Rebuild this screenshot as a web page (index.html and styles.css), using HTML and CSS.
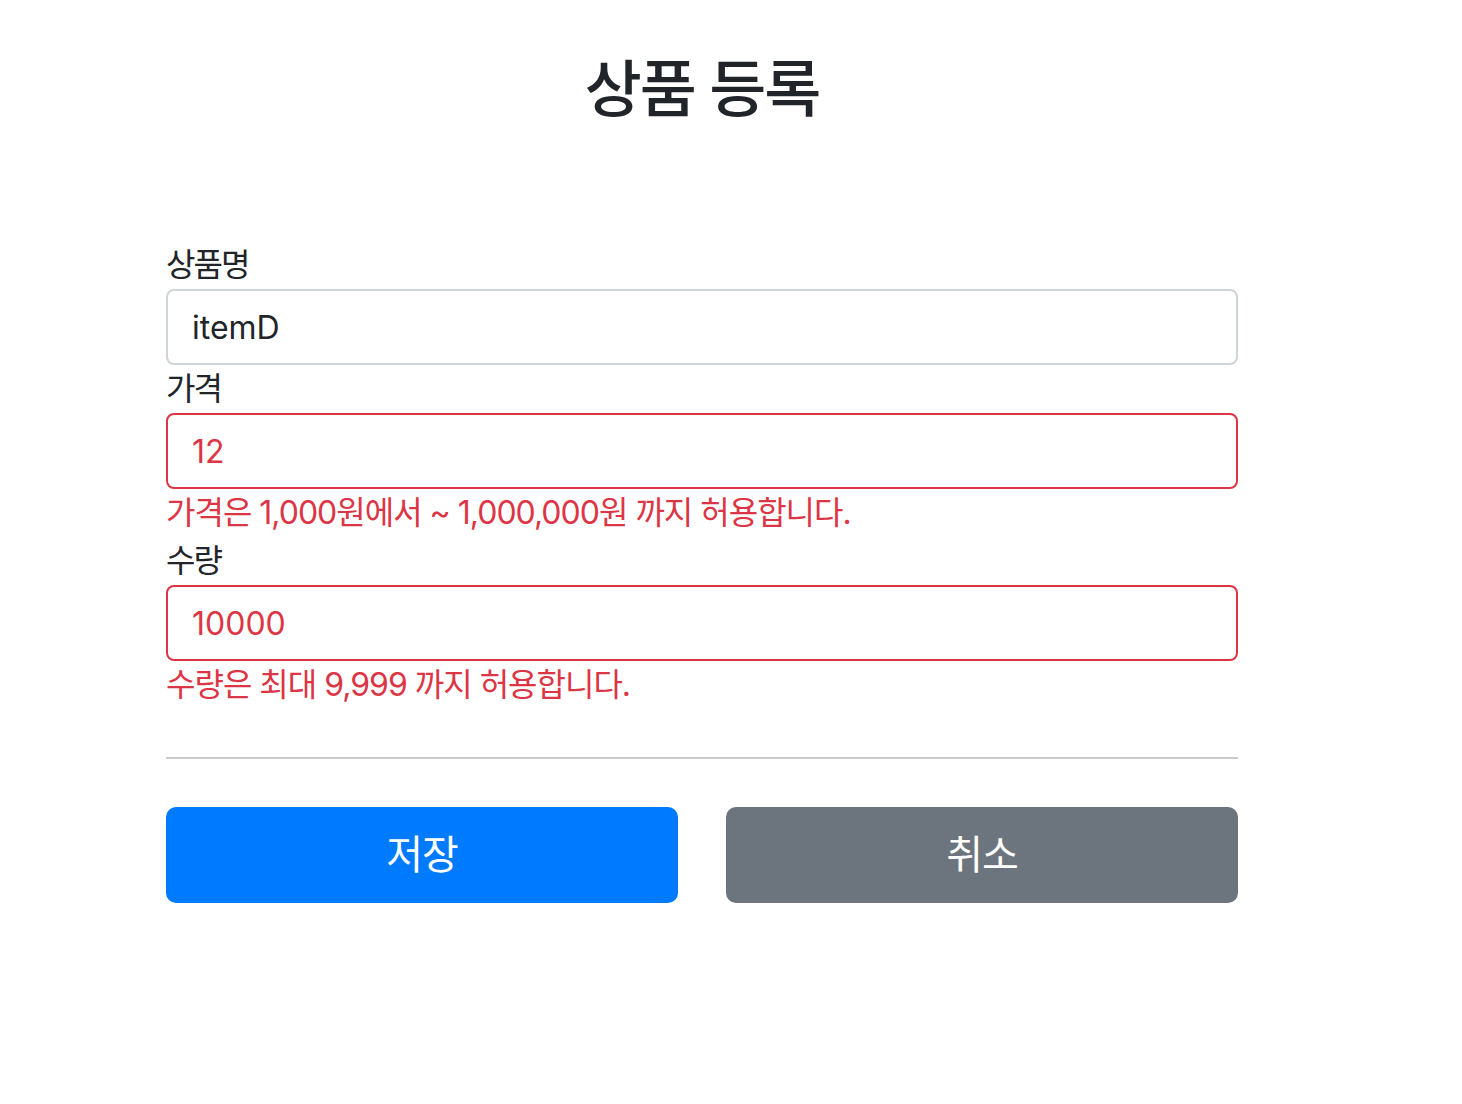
FILE: index.html
```html
<!DOCTYPE html>
<html lang="ko">
<head>
<meta charset="utf-8">
<title>상품 등록</title>
<link rel="stylesheet" href="styles.css">
</head>
<body>
<div class="container">
  <div class="header">
    <h2 class="title">상품 등록</h2>
  </div>
  <form class="form">
    <div class="field">
      <label class="label" for="itemName">상품명</label>
      <input class="control" id="itemName" type="text" value="itemD">
    </div>
    <div class="field">
      <label class="label" for="price">가격</label>
      <input class="control control-error" id="price" type="text" value="12">
      <div class="feedback">가격은 1,000원에서 ~ 1,000,000원 까지 허용합니다.</div>
    </div>
    <div class="field">
      <label class="label" for="quantity">수량</label>
      <input class="control control-error" id="quantity" type="text" value="10000">
      <div class="feedback">수량은 최대 9,999 까지 허용합니다.</div>
    </div>
    <hr class="divider">
    <div class="actions">
      <button class="btn btn-primary" type="submit">저장</button>
      <button class="btn btn-secondary" type="button">취소</button>
    </div>
  </form>
</div>
</body>
</html>
```
FILE: styles.css
```css
html, body {
  margin: 0;
  padding: 0;
  background: #ffffff;
}

body {
  font-family: "Inter", "Noto Sans CJK KR", "Noto Sans", sans-serif;
  color: #212529;
  font-size: 32px;
  line-height: 1.5;
}

.container {
  box-sizing: border-box;
  width: 1120px;
  margin-left: 142px;
  padding: 51px 24px 0;
}

.header {
  text-align: center;
  margin-bottom: 113px;
}

.title {
  margin: 0;
  font-size: 62px;
  font-weight: 500;
  line-height: 77px;
  letter-spacing: -2px;
  color: #212529;
}

.form {
  display: flex;
  flex-direction: column;
}

.field {
  display: flex;
  flex-direction: column;
}

.label {
  display: block;
  font-size: 32px;
  line-height: 48px;
  letter-spacing: -2px;
  color: #212529;
}

.control {
  box-sizing: border-box;
  display: block;
  width: 100%;
  height: 76px;
  padding: 12px 24px;
  font-family: inherit;
  font-size: 32px;
  line-height: 48px;
  color: #212529;
  background: #ffffff;
  border: 2px solid #ced4da;
  border-radius: 8px;
  outline: none;
}

.control-error {
  border-color: #dc3545;
  color: #dc3545;
}

.feedback {
  margin-top: 0;
  font-size: 32px;
  line-height: 48px;
  letter-spacing: -1px;
  color: #dc3545;
}

.divider {
  margin: 48px 0;
  border: 0;
  border-top: 2px solid #c8c9ca;
  height: 0;
}

.actions {
  display: grid;
  grid-template-columns: 1fr 1fr;
  column-gap: 48px;
}

.btn {
  box-sizing: border-box;
  height: 96px;
  padding: 16px 32px;
  font-family: inherit;
  font-size: 40px;
  line-height: 60px;
  letter-spacing: -1px;
  color: #ffffff;
  border: 2px solid transparent;
  border-radius: 10px;
  text-align: center;
  cursor: pointer;
}

.btn-primary {
  background: #007bff;
  border-color: #007bff;
}

.btn-secondary {
  background: #6c757d;
  border-color: #6c757d;
}
```
